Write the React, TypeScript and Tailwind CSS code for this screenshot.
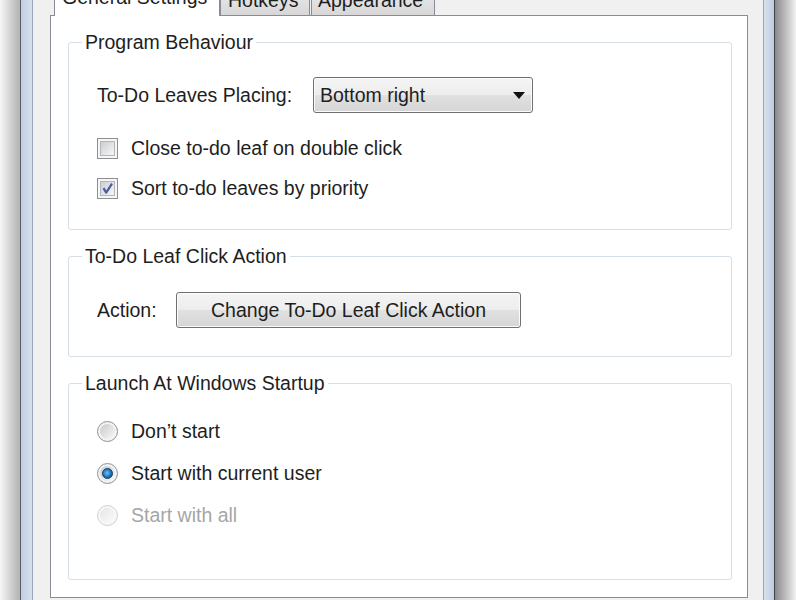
import React from "react";

function CheckBox({ checked }: { checked?: boolean }) {
  return (
    <svg width="21" height="21" viewBox="0 0 21 21" className="shrink-0">
      <defs>
        <linearGradient id="cbg" x1="0" y1="0" x2="1" y2="1">
          <stop offset="0" stopColor="#c9ccd1" />
          <stop offset="1" stopColor="#f8f8f8" />
        </linearGradient>
      </defs>
      <rect x="0.5" y="0.5" width="20" height="20" fill="#f6f6f6" stroke="#8e8f8f" />
      <rect x="3.5" y="3.5" width="14" height="14" fill="url(#cbg)" stroke="#b4b6ba" />
      {checked && (
        <path d="M6.5 10.2 L9.2 14.6 L15 5.6" fill="none" stroke="#4a5d9c" strokeWidth="2.2" strokeLinejoin="round" />
      )}
    </svg>
  );
}

function Radio({ checked, disabled }: { checked?: boolean; disabled?: boolean }) {
  return (
    <svg width="21" height="21" viewBox="0 0 21 21" className="shrink-0">
      <defs>
        <linearGradient id="rbg" x1="0" y1="0" x2="1" y2="1">
          <stop offset="0" stopColor="#c6c8cc" />
          <stop offset="1" stopColor="#fafafa" />
        </linearGradient>
        <linearGradient id="rbgd" x1="0" y1="0" x2="1" y2="1">
          <stop offset="0" stopColor="#e6e6e6" />
          <stop offset="1" stopColor="#fbfbfb" />
        </linearGradient>
        <radialGradient id="rdot" cx="0.45" cy="0.45" r="0.6">
          <stop offset="0" stopColor="#6fc3f5" />
          <stop offset="0.55" stopColor="#2680c4" />
          <stop offset="1" stopColor="#163f6e" />
        </radialGradient>
      </defs>
      <circle cx="10.5" cy="10.5" r="10" fill={disabled ? "#f7f7f7" : "#f4f4f4"} stroke={disabled ? "#cfcfcf" : "#8e8f8f"} />
      <circle cx="10.5" cy="10.5" r="7.5" fill={disabled ? "url(#rbgd)" : "url(#rbg)"} />
      {checked && <circle cx="10.5" cy="10.5" r="5" fill="url(#rdot)" stroke="#1c456f" strokeWidth="1" />}
    </svg>
  );
}

function Group({ title, children, className }: { title: string; children: React.ReactNode; className: string }) {
  return (
    <fieldset className="m-0 p-0 min-w-0 border border-[#d5dfe5] rounded-[3px]">
      <legend className="ml-[13px] px-[3px]">{title}</legend>
      <div className={className}>{children}</div>
    </fieldset>
  );
}

export default function App() {
  return (
    <div className="w-[796px] h-[600px] overflow-hidden flex bg-[#f0f0f0] font-['Liberation_Sans',Arial,sans-serif] text-[19.5px] leading-[22px] text-[#1e1e1e]">
      <div className="w-[20px] shrink-0 h-full bg-linear-to-r from-[#f7f7f7] to-[#b2b2b2]" />
      <div className="w-px shrink-0 h-full bg-[#56616d]" />
      <div className="w-[11px] shrink-0 h-full bg-linear-to-r from-[#c0cfe2] to-[#d6e0ec]" />
      <div className="w-px shrink-0 h-full bg-[#98a6b6]" />

      <div className="w-[730px] shrink-0 flex flex-col pl-[17px] pr-[15px]">
        <div className="h-[40px] -mt-[25px] flex items-end pl-[4px] shrink-0">
          <div className="relative z-10 h-[41px] -mb-px w-[166px] bg-white border border-b-0 border-[#898c95] pt-[10px] pl-[7px] whitespace-nowrap">
            General Settings
          </div>
          <div className="h-[37px] w-[90px] border border-b-0 border-[#898c95] bg-linear-to-b from-[#f3f3f3] to-[#d7d7d7] pt-[10px] pl-[7px] whitespace-nowrap">
            Hotkeys
          </div>
          <div className="ml-px h-[37px] w-[124px] border border-b-0 border-[#898c95] bg-linear-to-b from-[#f3f3f3] to-[#d7d7d7] pt-[10px] pl-[6px] whitespace-nowrap">
            Appearance
          </div>
        </div>

        <div className="h-[583px] shrink-0 border border-[#898c95] bg-white flex flex-col gap-[15px] pt-[15px] pl-[17px] pr-[15px]">
          <Group title="Program Behaviour" className="pt-[24px] pb-[30px] pl-[28px] flex flex-col">
            <div className="flex items-center h-[36px]">
              <span className="w-[216px] shrink-0 whitespace-nowrap">To-Do Leaves Placing:</span>
              <div className="w-[220px] h-[36px] rounded-[3px] border border-[#707070] bg-[linear-gradient(#f4f4f4,#ededed_50%,#e1e1e1_50%,#d5d5d5)] shadow-[inset_0_0_0_1px_#fbfbfb] flex items-center justify-between pl-[6px] pr-[7px]">
                <span>Bottom right</span>
                <svg width="12" height="7" viewBox="0 0 12 7">
                  <path d="M0 0 H12 L6 7 Z" fill="#111" />
                </svg>
              </div>
            </div>
            <div className="mt-[24px] h-[22px] flex items-center gap-[13px]">
              <CheckBox />
              <span className="whitespace-nowrap">Close to-do leaf on double click</span>
            </div>
            <div className="mt-[18px] h-[22px] flex items-center gap-[13px]">
              <CheckBox checked />
              <span className="whitespace-nowrap">Sort to-do leaves by priority</span>
            </div>
          </Group>

          <Group title="To-Do Leaf Click Action" className="pt-[25px] pb-[28px] pl-[28px]">
            <div className="flex items-center h-[36px]">
              <span className="w-[79px] shrink-0">Action:</span>
              <button className="w-[345px] h-[36px] rounded-[3px] border border-[#707070] bg-[linear-gradient(#f4f4f4,#ededed_50%,#e1e1e1_50%,#d5d5d5)] shadow-[inset_0_0_0_1px_#fbfbfb] flex items-center justify-center text-[#1e1e1e]">
                Change To-Do Leaf Click Action
              </button>
            </div>
          </Group>

          <Group title="Launch At Windows Startup" className="pt-[26px] pb-[53px] pl-[28px] flex flex-col gap-[20px]">
            <div className="h-[22px] flex items-center gap-[13px]">
              <Radio />
              <span>Don’t start</span>
            </div>
            <div className="h-[22px] flex items-center gap-[13px]">
              <Radio checked />
              <span>Start with current user</span>
            </div>
            <div className="h-[22px] flex items-center gap-[13px]">
              <Radio disabled />
              <span className="text-[#a6a6a6]">Start with all</span>
            </div>
          </Group>
        </div>
      </div>

      <div className="w-px shrink-0 h-full bg-[#98a6b6]" />
      <div className="w-[10px] shrink-0 h-full bg-linear-to-r from-[#d6e0ec] to-[#bfcde0]" />
      <div className="w-px shrink-0 h-full bg-[#3c4249]" />
      <div className="w-[21px] shrink-0 h-full bg-linear-to-r from-[#8a8a8a] to-[#f2f2f2]" />
    </div>
  );
}
